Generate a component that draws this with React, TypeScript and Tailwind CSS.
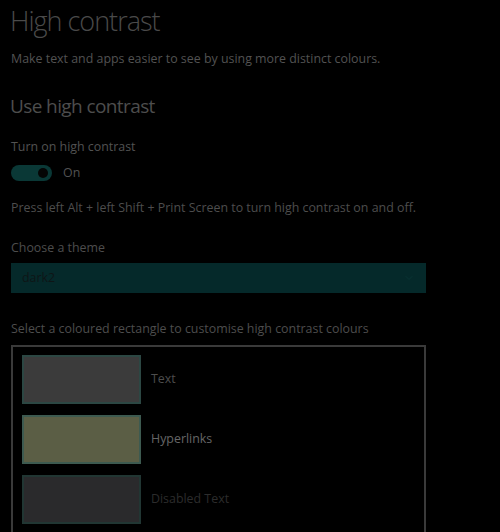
import { ChevronDown } from "lucide-react";

const swatches = [
  { label: "Text", bg: "bg-[#3b3b3b]", border: "border-[#2c4743]", text: "text-[#4d4d4d]" },
  { label: "Hyperlinks", bg: "bg-[#5b5e45]", border: "border-[#3d5a50]", text: "text-[#666666]" },
  { label: "Disabled Text", bg: "bg-[#2a2a2c]", border: "border-[#213633]", text: "text-[#2c2c2c]" },
];

export default function App() {
  return (
    <div
      className="h-[532px] w-[500px] overflow-hidden bg-black pl-[10px] pt-[3px]"
      style={{ fontFamily: '"Open Sans", "Noto Sans", sans-serif' }}
    >
      <h1 className="text-[27px] font-light leading-[36px] tracking-[-1px] text-[#4a4a4a]">High contrast</h1>
      <p className="mt-[12px] pl-[1px] text-[12.4px] leading-[16px] text-[#525252]">
        Make text and apps easier to see by using more distinct colours.
      </p>

      <h2 className="mt-[26px] text-[19px] leading-[26px] tracking-[-0.6px] text-[#4d4d4d]">
        Use high contrast
      </h2>

      <div className="pl-[1px]">
        <p className="mt-[20px] text-[12.4px] leading-[16px] text-[#525252]">Turn on high contrast</p>
        <div className="mt-[10px] flex items-center gap-[11px]">
          <div className="flex h-[16px] w-[41px] items-center justify-end rounded-full bg-[#0a3836] pr-[4px]">
            <div className="h-[10px] w-[10px] rounded-full bg-[#050505]" />
          </div>
          <span className="text-[12.4px] leading-[16px] text-[#525252]">On</span>
        </div>

        <p className="mt-[19px] text-[12.4px] leading-[16px] text-[#4d4d4d]">
          Press left Alt + left Shift + Print Screen to turn high contrast on and off.
        </p>

        <p className="mt-[24px] text-[12.4px] leading-[16px] text-[#4d4d4d]">Choose a theme</p>
        <div className="mt-[7px] flex h-[30px] w-[415px] items-center justify-between bg-[#05292a] px-[11px]">
          <span className="text-[12.4px] text-[#0e1516]">dark2</span>
          <ChevronDown className="h-[12px] w-[12px] text-[#0a3434]" />
        </div>

        <p className="mt-[28px] text-[12.4px] leading-[16px] text-[#4d4d4d]">
          Select a coloured rectangle to customise high contrast colours
        </p>
        <div className="mt-[8px] flex w-[415px] flex-col gap-[11px] border-2 border-[#3a3a3a] px-[9px] pb-[14px] pt-[8px]">
          {swatches.map((s) => (
            <div key={s.label} className="flex items-center gap-[10px]">
              <div className={`h-[49px] w-[119px] border-2 ${s.border} ${s.bg}`} />
              <span className={`text-[12.4px] ${s.text}`}>{s.label}</span>
            </div>
          ))}
        </div>
      </div>
    </div>
  );
}
